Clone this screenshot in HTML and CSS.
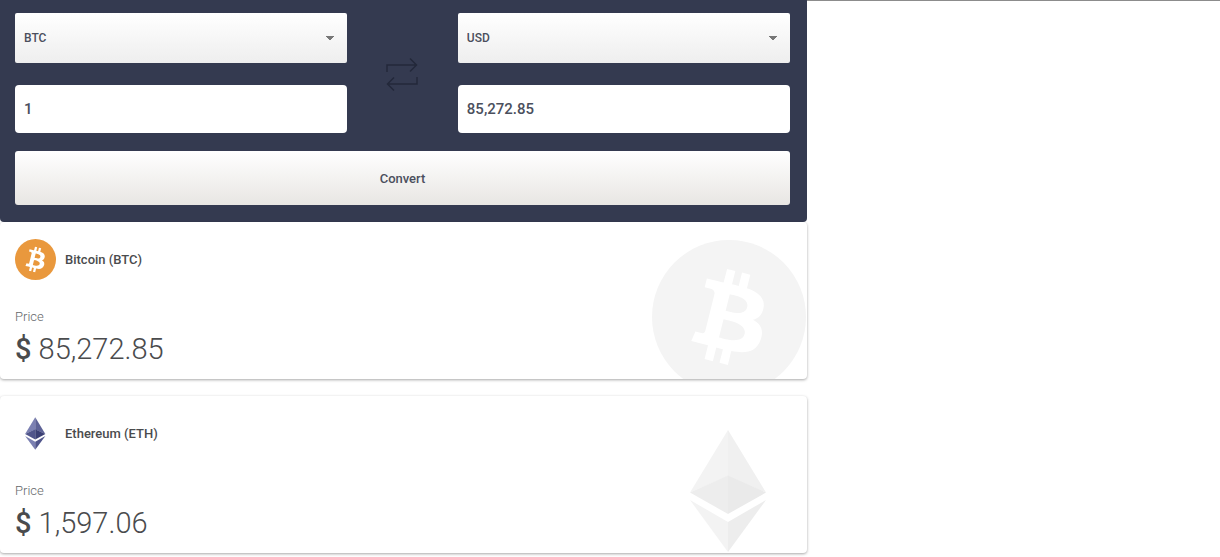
FILE: index.html
```
<!DOCTYPE html>
<html lang="en">
<head>
<meta charset="utf-8">
<title>Crypto converter</title>
<link rel="stylesheet" href="styles.css">
</head>
<body>
<svg class="defs" aria-hidden="true">
  <symbol id="btc" viewBox="0 0 32 32">
    <circle class="coin" cx="16" cy="16" r="16"/>
    <path class="mark" d="M23.189 14.02c.314-2.096-1.283-3.223-3.465-3.975l.708-2.84-1.728-.43-.69 2.765c-.454-.114-.92-.22-1.385-.326l.695-2.783L15.596 6l-.708 2.839c-.376-.086-.746-.17-1.104-.26l.002-.009-2.384-.595-.46 1.846s1.283.294 1.256.312c.7.175.826.638.805 1.006l-.806 3.235c.048.012.11.03.18.057l-.183-.045-1.13 4.532c-.086.212-.303.531-.793.41.018.025-1.256-.313-1.256-.313l-.858 1.978 2.25.561c.418.105.828.215 1.231.318l-.715 2.872 1.727.43.708-2.84c.472.127.93.245 1.378.357l-.706 2.828 1.728.43.715-2.866c2.948.558 5.164.333 6.097-2.333.752-2.146-.037-3.385-1.588-4.192 1.13-.26 1.98-1.003 2.207-2.538zm-3.95 5.538c-.533 2.147-4.148.986-5.32.695l.95-3.805c1.172.293 4.929.872 4.37 3.11zm.535-5.569c-.487 1.953-3.495.96-4.47.717l.86-3.45c.975.243 4.118.696 3.61 2.733z"/>
  </symbol>
  <symbol id="eth" viewBox="0 0 154 154">
    <path class="f1" d="M76 16v46L38 78.500z"/>
    <path class="f2" d="M76 16v46l38 16.500z"/>
    <path class="f3" d="M76 61.500V100L38 78.500z"/>
    <path class="f4" d="M76 61.500V100l38-21.500z"/>
    <path class="f1" d="M38 86l38 22v30z"/>
    <path class="f3" d="M114 86l-38 22v30z"/>
  </symbol>
</svg>
<div class="page">
  <main>
    <form class="converter">
      <select class="field select from" aria-label="From currency"><option>BTC</option></select>
      <select class="field select to" aria-label="To currency"><option>USD</option></select>
      <svg class="swap" viewBox="0 0 32 32" aria-hidden="true">
        <path d="M1 15V8h29M24 1.500l6.500 6.500-6.500 6.500M31 20v7H2M8 20.500l-6.500 6.500L8 33.500"/>
      </svg>
      <input class="field amount from" type="text" value="1" aria-label="Amount">
      <input class="field amount to" type="text" value="85,272.85" aria-label="Converted amount">
      <button class="convert" type="button">Convert</button>
    </form>
    <section class="card">
      <svg class="watermark" aria-hidden="true"><use href="#btc"/></svg>
      <h2 class="name"><svg class="logo" aria-hidden="true"><use href="#btc"/></svg>Bitcoin (BTC)</h2>
      <p class="label">Price</p>
      <p class="price"><b>$</b> 85,272.85</p>
    </section>
    <section class="card">
      <svg class="watermark" aria-hidden="true"><use href="#eth"/></svg>
      <h2 class="name"><svg class="logo" aria-hidden="true"><use href="#eth"/></svg>Ethereum (ETH)</h2>
      <p class="label">Price</p>
      <p class="price"><b>$</b> 1,597.06</p>
    </section>
  </main>
  <div class="side"></div>
</div>
</body>
</html>
```
FILE: styles.css
```
* { box-sizing: border-box; }
body {
  margin: 0;
  background: #fff;
  color: #4a4b4d;
  font-family: Roboto, "Liberation Sans", sans-serif;
  font-size: 13px;
}
.defs { position: absolute; width: 0; height: 0; }
.page { display: grid; grid-template-columns: 807fr 413fr; }
.side { border-top: 1px solid #8c8c8c; }

.converter {
  display: grid;
  grid-template-columns: 3fr 1fr 3fr;
  padding: 13px 17px 17px 15px;
  background: #343a50;
  border-radius: 0 0 4px 4px;
}
.field {
  width: 100%;
  margin: 0;
  padding: 0 9px;
  border: 0;
  color: #4b4f5d;
  font-family: inherit;
  font-weight: 500;
}
.from { grid-column: 1; }
.to { grid-column: 3; }
.select {
  grid-row: 1;
  height: 50px;
  appearance: none;
  border-radius: 2px;
  font-size: 12px;
  background:
    linear-gradient(to bottom right, #777 50%, transparent 51%) right 13px center / 4px 4px no-repeat,
    linear-gradient(to bottom left, #777 50%, transparent 51%) right 17px center / 4px 4px no-repeat,
    linear-gradient(#fff, #eee);
}
.amount {
  grid-row: 2;
  height: 48px;
  margin-top: 22px;
  border-radius: 4px;
  background: #fff;
  font-size: 15px;
}
.swap {
  grid-column: 2;
  grid-row: 1 / 3;
  place-self: center;
  width: 32px;
  height: 32px;
  overflow: visible;
  fill: none;
  stroke: #23283a;
  stroke-width: 1.5;
}
.convert {
  grid-column: 1 / -1;
  height: 54px;
  margin-top: 18px;
  border: 0;
  border-radius: 3px;
  background: linear-gradient(#fff, #e8e6e3);
  color: #4b4f5d;
  font-family: inherit;
  font-size: 13px;
  font-weight: 500;
}

.card {
  position: relative;
  overflow: hidden;
  margin-bottom: 17px;
  padding: 17px 15px 8px;
  border-radius: 4px;
  box-shadow: 0 1px 3px rgba(0, 0, 0, .35);
}
.name {
  display: flex;
  align-items: center;
  gap: 9px;
  margin: 0 0 27px;
  font-size: 13px;
  font-weight: 500;
}
.logo { width: 41px; height: 41px; }
.label {
  margin: 0;
  color: #66676a;
  font-weight: 300;
  line-height: 20px;
}
.price {
  margin: 0;
  font-size: 29px;
  font-weight: 300;
  line-height: 44px;
}
.price b { font-weight: 500; }
.watermark {
  position: absolute;
  top: 18px;
  right: 1px;
  width: 154px;
  height: 154px;
}
.mark { fill: #fff; }
.logo { --coin: #e9983d; --f1: #7b80b2; --f2: #5d6296; --f3: #50558b; --f4: #3b4075; }
.watermark { --coin: #f4f4f4; --f1: #f3f3f3; --f2: #f0f0f0; --f3: #ededed; --f4: #eaeaea; }
.coin { fill: var(--coin); }
.f1 { fill: var(--f1); }
.f2 { fill: var(--f2); }
.f3 { fill: var(--f3); }
.f4 { fill: var(--f4); }
```
